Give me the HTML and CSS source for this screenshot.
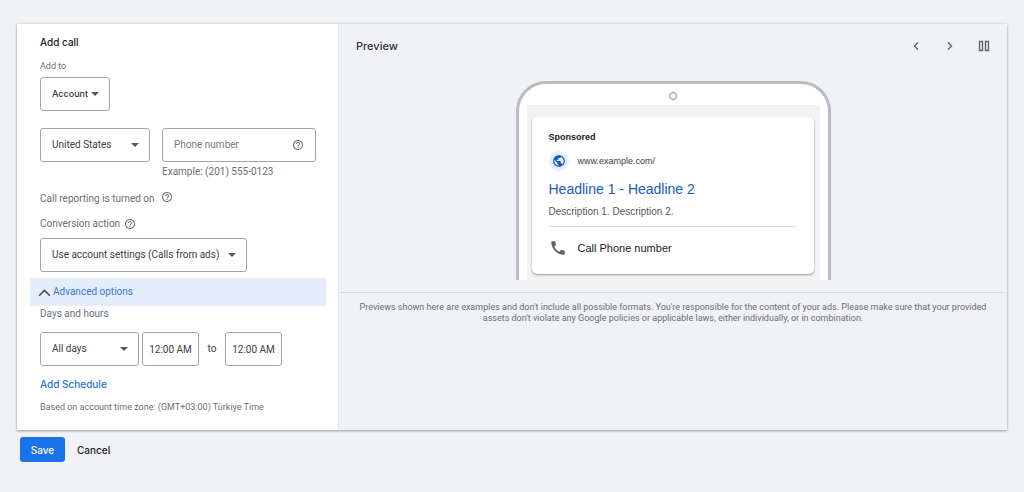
FILE: index.html
```html
<!DOCTYPE html>
<html lang="en">
<head>
<meta charset="utf-8">
<meta name="viewport" content="width=device-width, initial-scale=1">
<title>Add call</title>
<link rel="stylesheet" href="styles.css">
</head>
<body>
<svg class="defs" width="0" height="0" aria-hidden="true">
  <symbol id="help" viewBox="0 0 24 24"><path fill="currentColor" d="M11 18h2v-2h-2v2zm1-16C6.480 2 2 6.480 2 12s4.480 10 10 10 10-4.480 10-10S17.520 2 12 2zm0 18c-4.410 0-8-3.590-8-8s3.590-8 8-8 8 3.590 8 8-3.590 8-8 8zm0-14c-2.210 0-4 1.790-4 4h2c0-1.100.9-2 2-2s2 .9 2 2c0 2-3 1.750-3 5h2c0-2.250 3-2.500 3-5 0-2.210-1.790-4-4-4z"/></symbol>
</svg>
<main class="page">
  <div class="panel">
    <form class="editor" id="call-form">
      <h1 class="title">Add call</h1>
      <label class="label add-to" for="level">Add to</label>
      <div class="select level">
        <select id="level"><option>Account</option></select>
      </div>
      <div class="row phone-row">
        <div class="select country">
          <select aria-label="Country"><option>United States</option></select>
        </div>
        <div class="phone-field">
          <div class="input-box">
            <input type="tel" placeholder="Phone number" aria-label="Phone number">
            <svg class="help"><use href="#help"/></svg>
          </div>
          <p class="hint">Example: (201) 555-0123</p>
        </div>
      </div>
      <p class="label reporting">Call reporting is turned on <svg class="help raised"><use href="#help"/></svg></p>
      <div class="label conversion-label"><label for="conversion">Conversion action</label> <svg class="help"><use href="#help"/></svg></div>
      <div class="select conversion">
        <select id="conversion"><option>Use account settings (Calls from ads)</option></select>
      </div>
      <button type="button" class="advanced" aria-expanded="true">
        <svg class="chevron" viewBox="0 0 12 8"><path d="M1 7l5-5 5 5" fill="none" stroke="#4a4d51" stroke-width="1.500"/></svg>
        Advanced options
      </button>
      <label class="label days" for="days">Days and hours</label>
      <div class="row schedule">
        <div class="select day">
          <select id="days"><option>All days</option></select>
        </div>
        <input class="time" type="text" value="12:00 AM" aria-label="Start time">
        <span class="to">to</span>
        <input class="time" type="text" value="12:00 AM" aria-label="End time">
      </div>
      <a class="add-schedule" href="#">Add Schedule</a>
      <p class="zone">Based on account time zone: (GMT+03:00) Türkiye Time</p>
    </form>
    <section class="preview">
      <header class="preview-head">
        <h2 class="preview-title">Preview</h2>
        <button type="button" class="icon-button" aria-label="Previous"><svg viewBox="0 0 12 12"><path d="M8 2.500L4.500 6 8 9.500"/></svg></button>
        <button type="button" class="icon-button" aria-label="Next"><svg viewBox="0 0 12 12"><path d="M4 2.500L7.500 6 4 9.500"/></svg></button>
        <button type="button" class="icon-button" aria-label="Side by side"><svg viewBox="0 0 12 12"><path d="M1.500 1.500h3v9h-3zM7.500 1.500h3v9h-3z"/></svg></button>
      </header>
      <div class="device">
        <span class="camera"></span>
        <div class="screen">
          <article class="ad">
            <p class="sponsored">Sponsored</p>
            <div class="site">
              <span class="globe"><svg viewBox="0 0 24 24"><path fill="#1a56b8" d="M12 2C6.480 2 2 6.480 2 12s4.480 10 10 10 10-4.480 10-10S17.520 2 12 2zm-1 17.930c-3.950-.49-7-3.850-7-7.930 0-.62.080-1.210.210-1.790L9 15v1c0 1.100.9 2 2 2v1.930zm6.900-2.540c-.26-.81-1-1.390-1.900-1.390h-1v-3c0-.55-.45-1-1-1H8v-2h2c.55 0 1-.45 1-1V7h2c1.100 0 2-.9 2-2v-.41c2.930 1.190 5 4.060 5 7.410 0 2.080-.8 3.970-2.100 5.390z"/></svg></span>
              <span>www.example.com/</span>
            </div>
            <a class="headline" href="#">Headline 1 - Headline 2</a>
            <p class="description">Description 1. Description 2.</p>
            <div class="call">
              <svg viewBox="0 0 24 24"><path fill="#5f6368" d="M20.010 15.380c-1.230 0-2.420-.2-3.530-.56-.35-.12-.74-.03-1.010.24l-1.570 1.970c-2.830-1.350-5.480-3.900-6.890-6.830l1.950-1.660c.27-.28.35-.67.24-1.020-.37-1.110-.56-2.300-.56-3.530 0-.54-.45-.99-.99-.99H4.190C3.650 3 3 3.240 3 3.990 3 13.280 10.730 21 20.010 21c.71 0 .99-.63.99-1.180v-3.450c0-.54-.45-.99-.99-.99z"/></svg>
              <span>Call Phone number</span>
            </div>
          </article>
        </div>
      </div>
      <p class="disclaimer">Previews shown here are examples and don't include all possible formats. You're responsible for the content of your ads. Please make sure that your provided assets don't violate any Google policies or applicable laws, either individually, or in combination.</p>
    </section>
  </div>
  <div class="actions">
    <button type="submit" form="call-form" class="save">Save</button>
    <button type="button" class="cancel">Cancel</button>
  </div>
</main>
</body>
</html>
```
FILE: styles.css
```css
* {
  box-sizing: border-box;
}

body {
  margin: 0;
  background: #f0f2f5;
  color: #3c4043;
  font: 10px/14px Roboto, "Liberation Sans", sans-serif;
}

h1, h2, p {
  margin: 0;
}

button, input, select {
  font: inherit;
  color: inherit;
}

button {
  border: 0;
  padding: 0;
  background: none;
  cursor: pointer;
}

a {
  text-decoration: none;
}

.defs {
  position: absolute;
}

.page {
  padding: 24px 17px 0;
}

.panel {
  display: flex;
  box-shadow: 0 1px 2px rgba(60, 64, 67, .4), 0 0 3px rgba(60, 64, 67, .2);
}

.editor {
  display: flex;
  flex-direction: column;
  align-items: flex-start;
  flex: 0 0 321px;
  padding: 11px 12px 16px 23px;
  background: #fff;
}

.title {
  font: 500 10px/14px Inter, Roboto, sans-serif;
  color: #202124;
}

.label {
  color: #6b6f74;
}

.add-to {
  margin: 10px 0 4px;
  font-size: 9px;
}

.select {
  position: relative;
}

.select::after {
  content: "";
  position: absolute;
  right: 11px;
  top: 15px;
  border: 4px solid transparent;
  border-top-color: #55585c;
  border-bottom: 0;
  pointer-events: none;
}

.select select {
  width: 100%;
  height: 34px;
  padding: 0 11px;
  appearance: none;
  border: 1px solid #a2a5a8;
  border-radius: 3px;
  background: #fff;
}

.level {
  width: 70px;
}

.level select {
  font: 500 9px/14px Inter, Roboto, sans-serif;
  color: #303236;
}

.row {
  display: flex;
}

.phone-row {
  gap: 12px;
  margin-top: 17px;
}

.country {
  width: 110px;
}

.input-box {
  display: flex;
  align-items: center;
  width: 154px;
  height: 34px;
  padding: 0 11px;
  border: 1px solid #a2a5a8;
  border-radius: 3px;
}

.input-box input {
  flex: 1;
  min-width: 0;
  padding: 0;
  border: 0;
  background: none;
}

.input-box input::placeholder {
  color: #777b80;
  opacity: 1;
}

.hint {
  margin-top: 3px;
  color: #6b6f74;
}

.help {
  width: 12px;
  height: 12px;
  color: #6b6f74;
}

.reporting, .conversion-label {
  display: flex;
  align-items: center;
  gap: 4px;
}

.reporting {
  margin-top: 12px;
}

.raised {
  margin: 0 0 4px 2px;
}

.conversion-label {
  margin: 10px 0 7px;
}

.conversion {
  width: 207px;
}

.advanced {
  display: flex;
  align-items: center;
  align-self: stretch;
  gap: 2px;
  height: 28px;
  margin: 6px 0 0 -10px;
  padding-left: 8px;
  background: #e3edfc;
  color: #3b78c9;
}

.chevron {
  width: 13px;
  height: 9px;
}

.days {
  margin: 1px 0 11px;
}

.schedule {
  align-items: center;
}

.day {
  width: 99px;
  margin-right: 3px;
}

.time {
  width: 57px;
  height: 34px;
  padding: 0;
  border: 1px solid #a2a5a8;
  border-radius: 3px;
  text-align: center;
}

.to {
  width: 26px;
  text-align: center;
}

.add-schedule {
  margin-top: 11px;
  font: 500 10px/14px Inter, Roboto, sans-serif;
  color: #2a73d5;
}

.zone {
  margin-top: 9px;
  font-size: 9px;
  color: #6b6f74;
}

.preview {
  flex: 1;
  min-width: 0;
  border-left: 1px solid #e3e5e8;
}

.preview-head {
  display: flex;
  align-items: center;
  gap: 10px;
  height: 44px;
  padding: 0 11px 0 17px;
}

.preview-title {
  margin-right: auto;
  font: 500 11px/16px Inter, Roboto, sans-serif;
  color: #303236;
}

.icon-button {
  width: 24px;
  height: 24px;
}

.icon-button svg {
  display: block;
  width: 12px;
  height: 12px;
  margin: auto;
  fill: none;
  stroke: #5f6368;
  stroke-width: 1.4;
}

.device {
  width: 315px;
  margin: 13px auto 12px;
  padding: 0 8px;
  border: 3px solid #b9bdc3;
  border-bottom: 0;
  border-radius: 30px 30px 0 0;
  background: #fff;
}

.camera {
  display: block;
  width: 8px;
  height: 8px;
  margin: 8px auto 5px;
  border: 1px solid #85898e;
  border-radius: 50%;
}

.screen {
  padding: 12px 6px 6px 5px;
  background: #f1f2f3;
}

.ad {
  padding: 13px 18px 17px 17px;
  border-radius: 5px;
  background: #fff;
  box-shadow: 0 1px 2px rgba(60, 64, 67, .5);
  font-family: "Liberation Sans", Arial, sans-serif;
}

.sponsored {
  font-size: 9px;
  font-weight: 700;
  color: #202124;
}

.site {
  display: flex;
  align-items: center;
  gap: 9px;
  margin-top: 7px;
  font-size: 9px;
}

.globe {
  display: flex;
  padding: 3px;
  border-radius: 50%;
  background: #e3edfc;
}

.globe svg {
  width: 14px;
  height: 14px;
}

.headline {
  display: block;
  margin-top: 9px;
  font-size: 14px;
  line-height: 18px;
  color: #2159c4;
}

.description {
  margin: 7px 0;
  font-size: 10px;
  color: #55585c;
}

.call {
  display: flex;
  align-items: center;
  gap: 11px;
  padding-top: 12px;
  border-top: 1px solid #dadce0;
  font-size: 11px;
  line-height: 18px;
  color: #202124;
}

.call svg {
  width: 18px;
  height: 18px;
}

.disclaimer {
  padding: 9px 12px 0;
  border-top: 1px solid #d9dbdf;
  font-size: 9px;
  line-height: 11px;
  text-align: center;
  color: #6b6f74;
}

.actions {
  display: flex;
  align-items: center;
  gap: 12px;
  padding: 7px 3px;
  font: 500 10px/14px Inter, Roboto, sans-serif;
}

.save {
  width: 45px;
  height: 25px;
  border-radius: 3px;
  background: #1a73e8;
  color: #fff;
}

.cancel {
  color: #202124;
}
```
